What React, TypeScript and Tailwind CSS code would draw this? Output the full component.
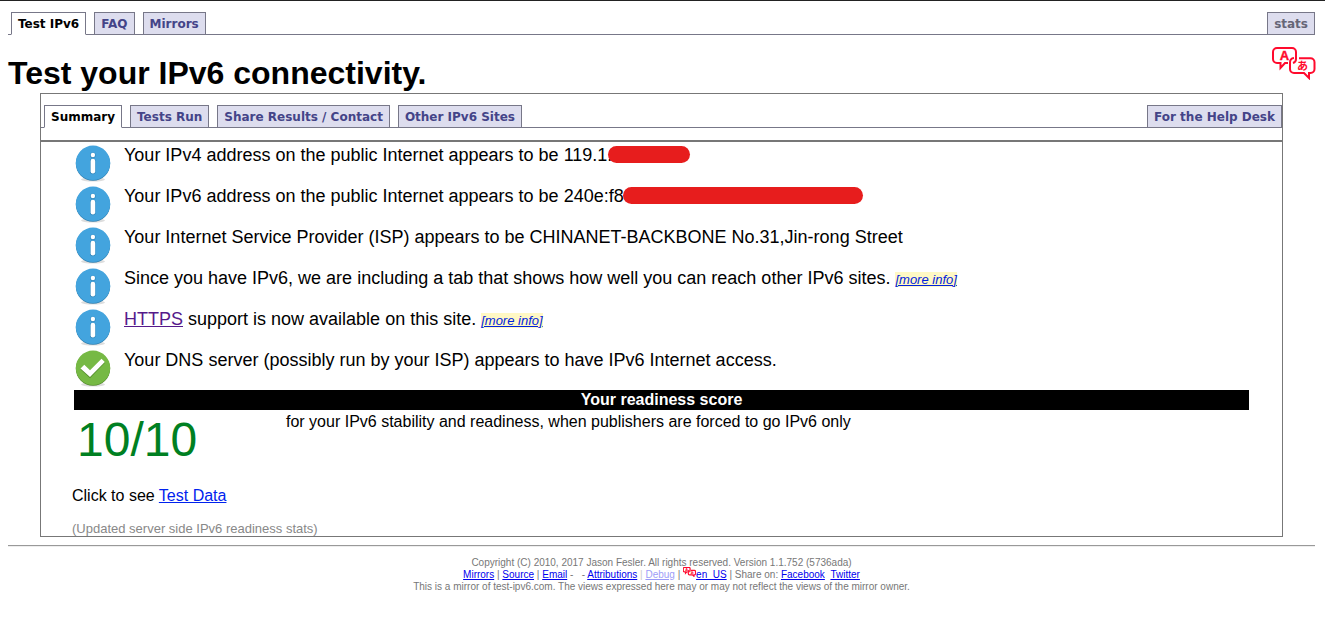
import type { ReactNode } from "react";

function TabBar({ tabs, end, endClass, inset }: { tabs: string[]; end: string; endClass: string; inset: string }) {
  const base = "-mb-px h-[23px] whitespace-nowrap border border-[#777788] px-1.5 pt-px leading-5";
  return (
    <nav
      className={`flex gap-2 border-b border-[#777788] font-['Verdana','DejaVu_Sans',sans-serif] text-[12px] font-bold ${inset}`}
    >
      {tabs.map((tab, i) => (
        <a
          key={tab}
          href="#"
          className={`${base} ${i === 0 ? "border-b-white bg-white text-black" : "bg-[#ddddee] text-[#444488]"}`}
        >
          {tab}
        </a>
      ))}
      <a href="#" className={`${base} ml-auto bg-[#ddddee] ${endClass}`}>
        {end}
      </a>
    </nav>
  );
}

function InfoIcon() {
  return (
    <svg viewBox="0 0 36 37" className="h-[37px] w-9" aria-hidden="true">
      <ellipse cx="18" cy="34.5" rx="12" ry="2" fill="#dddddd" />
      <circle cx="18" cy="18.6" r="17.2" fill="#2d7fb0" />
      <circle cx="18" cy="17.8" r="17.2" fill="#43a4de" />
      <rect x="15" y="13.6" width="5.6" height="15.6" rx="2.6" fill="#2f86bb" />
      <rect x="15.6" y="13.8" width="4.6" height="14.6" rx="2.2" fill="#ffffff" />
      <circle cx="17.9" cy="10.2" r="2.7" fill="#2f86bb" />
      <circle cx="17.9" cy="10" r="2.2" fill="#ffffff" />
    </svg>
  );
}

function CheckIcon() {
  return (
    <svg viewBox="0 0 36 37" className="h-[37px] w-9" aria-hidden="true">
      <ellipse cx="18" cy="34.5" rx="12" ry="2" fill="#dddddd" />
      <circle cx="18" cy="18.6" r="17.2" fill="#548a2c" />
      <circle cx="18" cy="17.8" r="17.2" fill="#76b944" />
      <path d="M5.500 19.500l4-3.800 5.500 5.300L26.600 9.500l3.400 3.300L15 28.300z" fill="#558e2c" />
      <path d="M5.500 18.500l3.800-3.700 5.700 5.500L26.500 8.700l3.300 3.300L15 27z" fill="#ffffff" />
    </svg>
  );
}

function TranslateIcon({ className, stroke }: { className: string; stroke: number }) {
  return (
    <svg viewBox="0 0 44 33" className={className} fill="none" stroke="#ff0a2d" strokeWidth={stroke} aria-hidden="true">
      <path d="M16 16h-3l-4.500 5v-5H5a4 4 0 0 1-4-4V5a4 4 0 0 1 4-4h15a4 4 0 0 1 4 4v7q0 3-3 4" />
      <path d="M27 11.300h11.500a4 4 0 0 1 4 4V22a4 4 0 0 1-4 4H37v5l-5-5H22a4 4 0 0 1-4-4v-6.500q0-4 4-4.500" />
      <text x="12.500" y="13" textAnchor="middle" fontSize="13" fontWeight="700" fill="#ff0a2d" stroke="#ff0a2d" strokeWidth="0.4" fontFamily="Liberation Sans, sans-serif">A</text>
      <text x="30.500" y="22.500" textAnchor="middle" fontSize="11" fontWeight="700" fill="#ff0a2d" stroke="none" fontFamily="Noto Sans CJK JP, sans-serif">あ</text>
    </svg>
  );
}

function MoreInfo() {
  return (
    <a href="#" className="bg-[#fff8c4] text-[13px] italic text-[#0022dd] underline">
      [more info]
    </a>
  );
}

function Row({ icon, children }: { icon: ReactNode; children: ReactNode }) {
  return (
    <tr className="h-[41px]">
      <td className="w-[50px] pl-px pt-[3px] align-top">{icon}</td>
      <td className="pt-[3px] align-top text-[18px] leading-5">{children}</td>
    </tr>
  );
}

const footLink = "text-[#0000ee] underline";

export default function App() {
  return (
    <div className="border-t border-[#222222] bg-white pb-10 pl-2 pr-2.5 font-['Liberation_Sans',Arial,sans-serif] text-black">
      <header>
        <div className="pt-[11px]">
          <TabBar tabs={["Test IPv6", "FAQ", "Mirrors"]} end="stats" endClass="text-[#666677]" inset="pl-[3px]" />
        </div>
        <div className="flex items-start justify-between pt-3">
          <h1 className="pb-0.5 pt-2 text-[32px] font-bold leading-9">Test your IPv6 connectivity.</h1>
          <TranslateIcon className="-mr-px h-[33px] w-11" stroke={2} />
        </div>
      </header>

      <main className="mx-8 border border-[#777777]">
        <div className="border-b-2 border-[#777777] pb-3 pt-[11px]">
          <TabBar
            tabs={["Summary", "Tests Run", "Share Results / Contact", "Other IPv6 Sites"]}
            end="For the Help Desk"
            endClass="text-[#444488]"
            inset="pl-[3px]"
          />
        </div>
        <div className="px-[33px]">
          <table className="w-full">
            <tbody>
              <Row icon={<InfoIcon />}>
                Your IPv4 address on the public Internet appears to be 119.1.
                <span className="relative -ml-1 -mt-1 inline-block h-[17px] w-[82px] rounded-full bg-[#e71d1d] align-middle" />
              </Row>
              <Row icon={<InfoIcon />}>
                Your IPv6 address on the public Internet appears to be 240e:f8
                <span className="relative -ml-px -mt-1 inline-block h-[17px] w-60 rounded-full bg-[#e71d1d] align-middle" />
              </Row>
              <Row icon={<InfoIcon />}>
                Your Internet Service Provider (ISP) appears to be CHINANET-BACKBONE No.31,Jin-rong Street
              </Row>
              <Row icon={<InfoIcon />}>
                Since you have IPv6, we are including a tab that shows how well you can reach other IPv6 sites.{" "}
                <MoreInfo />
              </Row>
              <Row icon={<InfoIcon />}>
                <a href="#" className="text-[#551a8b] underline">HTTPS</a> support is now available on this site.{" "}
                <MoreInfo />
              </Row>
              <Row icon={<CheckIcon />}>
                Your DNS server (possibly run by your ISP) appears to have IPv6 Internet access.
              </Row>
            </tbody>
          </table>
          <h2 className="mt-0.5 bg-black text-center text-[16px] font-bold leading-5 text-white">Your readiness score</h2>
          <div className="flex h-[74px] items-start">
            <p className="w-[212px] pl-[3px] pt-0.5 text-[48px] leading-[56px] text-[#008022]">10/10</p>
            <p className="pt-0.5 text-[16px] leading-5">
              for your IPv6 stability and readiness, when publishers are forced to go IPv6 only
            </p>
          </div>
          <p className="-ml-0.5 mt-0.5 text-[16px] leading-5">
            Click to see <a href="#" className="text-[#0022ee] underline">Test Data</a>
          </p>
          <p className="-ml-0.5 mt-[15px] text-[13px] leading-[15px] text-[#888888]">
            (Updated server side IPv6 readiness stats)
          </p>
        </div>
      </main>

      <hr className="mt-2 h-0.5 border-b border-t border-b-[#eeeeee] border-t-[#999999]" />
      <footer className="pt-2.5 text-center text-[10px] leading-3 text-[#777777]">
        <p>Copyright (C) 2010, 2017 Jason Fesler. All rights reserved. Version 1.1.752 (5736ada)</p>
        <p>
          <a href="#" className={footLink}>Mirrors</a> | <a href="#" className={footLink}>Source</a> |{" "}
          <a href="#" className={footLink}>Email</a> - &nbsp; - <a href="#" className={footLink}>Attributions</a>{" "}
          <span className="opacity-40">| <a href="#" className={footLink}>Debug</a></span> |{" "}
          <TranslateIcon className="-mt-1.5 inline-block h-2.5 w-[13px] align-middle" stroke={4} />
          <a href="#" className={footLink}>en_US</a> | Share on: <a href="#" className={footLink}>Facebook</a>
          {" "}&nbsp;<a href="#" className={footLink}>Twitter</a>
        </p>
        <p>This is a mirror of test-ipv6.com. The views expressed here may or may not reflect the views of the mirror owner.</p>
      </footer>
    </div>
  );
}
